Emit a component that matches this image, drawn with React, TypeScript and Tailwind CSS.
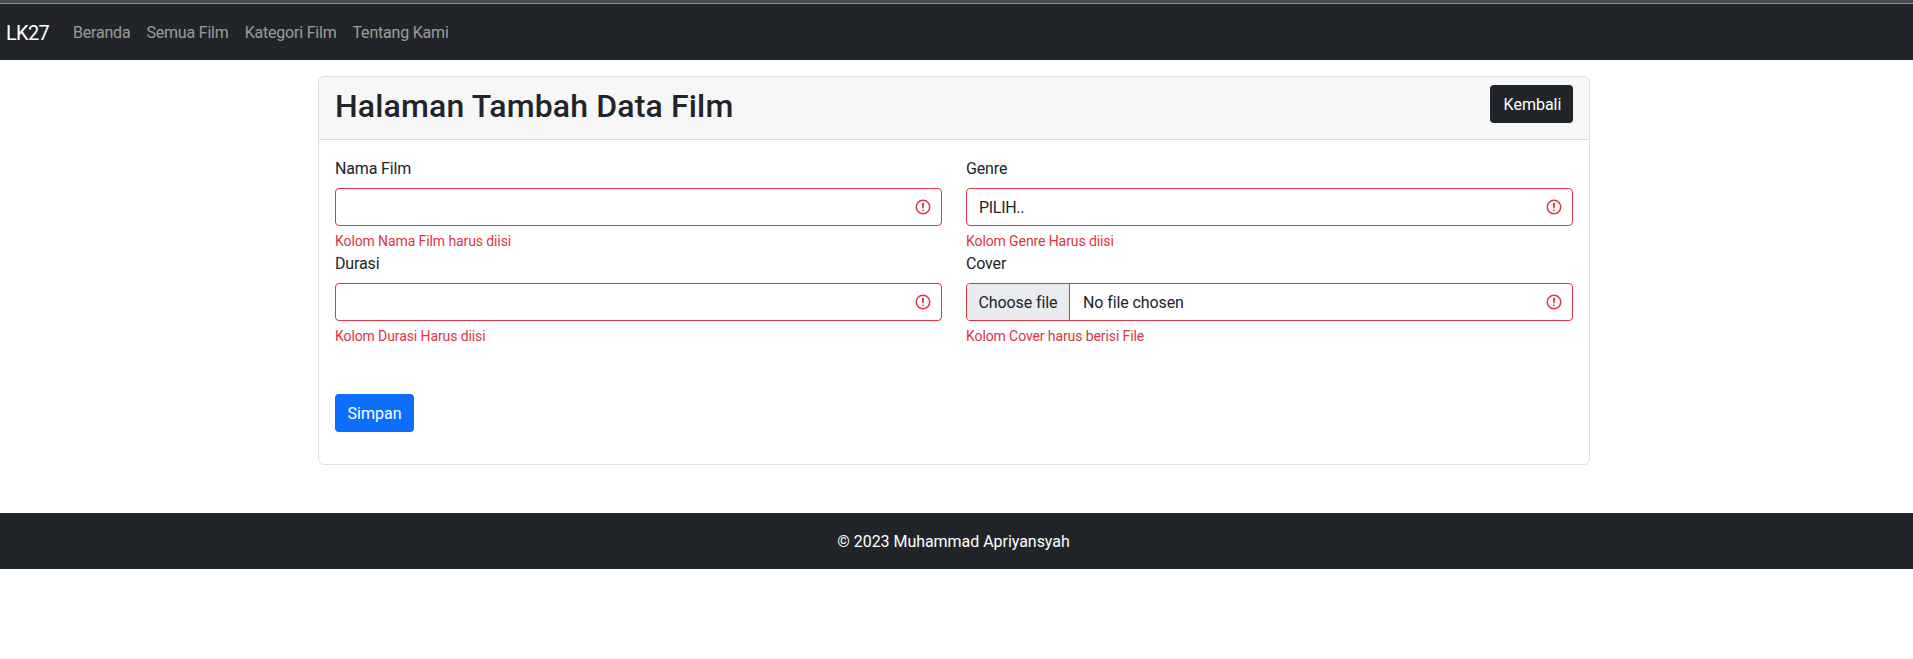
import React from "react";

function Alert() {
  return (
    <svg viewBox="0 0 12 12" width="18" height="18" fill="none" stroke="#dc3545" className="absolute right-[9px] top-[9px]">
      <circle cx="6" cy="6" r="4.5" />
      <path d="M5.8 3.6h.4L6 6.5z" strokeLinejoin="round" fill="#dc3545" />
      <circle cx="6" cy="8.2" r=".6" fill="#dc3545" stroke="none" />
    </svg>
  );
}

function Field({ label, error, children }: { label: string; error: string; children?: React.ReactNode }) {
  return (
    <div>
      <div className="h-6 mb-2 leading-[26px] tracking-[-0.15px]">{label}</div>
      <div className="relative h-[38px] border border-[#dc3545] rounded-[4px] bg-white flex items-center">
        {children}
        <Alert />
      </div>
      <div className="mt-1 h-[21px] text-[14px] leading-[23px] tracking-[-0.1px] text-[#dc3545]">{error}</div>
    </div>
  );
}

export default function App() {
  return (
    <div className="font-['Roboto','Noto_Sans',sans-serif] text-[16px] leading-6 text-[#212529] bg-white min-h-[659px]">
      <div className="h-[3px] bg-[#4a4a4a]" />
      <div className="h-px bg-[#8a8a8a]" />
      <nav className="h-[56px] bg-[#212529] flex items-center pl-[6px] pt-[2px]">
        <span className="text-[20px] tracking-[-0.7px] text-white mr-[16px] leading-[30px]">LK27</span>
        <div className="flex">
          {["Beranda", "Semua Film", "Kategori Film", "Tentang Kami"].map((t) => (
            <span key={t} className="px-2 tracking-[-0.2px] text-[#ffffff8c]">{t}</span>
          ))}
        </div>
      </nav>
      <div className="w-[1272px] ml-[318px] mt-4 border border-[#00000020] rounded-[6px] overflow-hidden">
        <div className="h-[63px] bg-[#f7f7f7] border-b border-[#00000020] flex items-start justify-between px-4 pt-2">
          <h1 className="text-[32px] font-medium h-[38px] leading-[43px] tracking-[0.15px]">Halaman Tambah Data Film</h1>
          <button className="h-[38px] w-[83px] pt-[2px] pl-[2px] rounded-[4px] bg-[#212529] text-white">Kembali</button>
        </div>
        <div className="p-4">
          <div className="grid grid-cols-2 gap-x-6">
            <Field label="Nama Film" error="Kolom Nama Film harus diisi" />
            <Field label="Genre" error="Kolom Genre Harus diisi">
              <span className="pl-3 pt-[2px] tracking-[-0.3px]">PILIH..</span>
            </Field>
            <Field label="Durasi" error="Kolom Durasi Harus diisi" />
            <Field label="Cover" error="Kolom Cover harus berisi File">
              <span className="h-full pt-[2px] w-[103px] justify-center tracking-[-0.1px] bg-[#e9ecef] border-r border-[#dc3545] flex items-center rounded-l-[3px]">Choose file</span>
              <span className="pl-[13px] pt-[2px] tracking-[-0.1px]">No file chosen</span>
            </Field>
          </div>
          <button className="mt-[48px] mb-[16px] h-[38px] w-[79px] pt-[2px] rounded-[4px] bg-[#0d6efd] text-white block">Simpan</button>
        </div>
      </div>
      <footer className="mt-12 h-[56px] bg-[#212529] text-white flex items-center justify-center pr-[6px] pt-[2px] tracking-[-0.04px]">© 2023 Muhammad Apriyansyah</footer>
    </div>
  );
}
